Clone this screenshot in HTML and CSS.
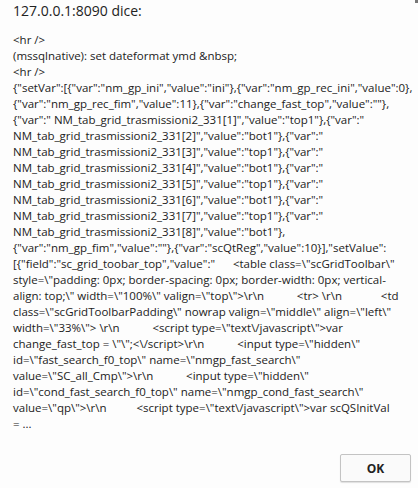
FILE: index.html
```html
<!DOCTYPE html>
<html lang="it">
<head>
    <link rel="stylesheet" href="styles.css">
</head>
<body>
    <div class="dialog">
        <span class="corner"></span>
        <div class="title">127.0.0.1:8090 dice:</div>
        <div class="message">
            <div class="line">&lt;hr /&gt;</div>
            <div class="line">(mssqlnative): set dateformat ymd &amp;nbsp;</div>
            <div class="line">&lt;hr /&gt;</div>
            <div class="line">{"setVar":[{"var":"nm_gp_ini","value":"ini"},{"var":"nm_gp_rec_ini","value":0},</div>
            <div class="line">{"var":"nm_gp_rec_fim","value":11},{"var":"change_fast_top","value":""},</div>
            <div class="line">{"var":" NM_tab_grid_trasmissioni2_331[1]","value":"top1"},{"var":"</div>
            <div class="line">NM_tab_grid_trasmissioni2_331[2]","value":"bot1"},{"var":"</div>
            <div class="line">NM_tab_grid_trasmissioni2_331[3]","value":"top1"},{"var":"</div>
            <div class="line">NM_tab_grid_trasmissioni2_331[4]","value":"bot1"},{"var":"</div>
            <div class="line">NM_tab_grid_trasmissioni2_331[5]","value":"top1"},{"var":"</div>
            <div class="line">NM_tab_grid_trasmissioni2_331[6]","value":"bot1"},{"var":"</div>
            <div class="line">NM_tab_grid_trasmissioni2_331[7]","value":"top1"},{"var":"</div>
            <div class="line">NM_tab_grid_trasmissioni2_331[8]","value":"bot1"},</div>
            <div class="line">{"var":"nm_gp_fim","value":""},{"var":"scQtReg","value":10}],"setValue":</div>
            <div class="line">[{"field":"sc_grid_toobar_top","value":"      &lt;table class=\"scGridToolbar\"</div>
            <div class="line">style=\"padding: 0px; border-spacing: 0px; border-width: 0px; vertical-</div>
            <div class="line">align: top;\" width=\"100%\" valign=\"top\"&gt;\r\n           &lt;tr&gt; \r\n             &lt;td</div>
            <div class="line">class=\"scGridToolbarPadding\" nowrap valign=\"middle\" align=\"left\"</div>
            <div class="line">width=\"33%\"&gt; \r\n           &lt;script type=\"text\/javascript\"&gt;var</div>
            <div class="line">change_fast_top = \"\";&lt;\/script&gt;\r\n           &lt;input type=\"hidden\"</div>
            <div class="line">id=\"fast_search_f0_top\" name=\"nmgp_fast_search\"</div>
            <div class="line">value=\"SC_all_Cmp\"&gt;\r\n           &lt;input type=\"hidden\"</div>
            <div class="line">id=\"cond_fast_search_f0_top\" name=\"nmgp_cond_fast_search\"</div>
            <div class="line">value=\"qp\"&gt;\r\n          &lt;script type=\"text\/javascript\"&gt;var scQSInitVal</div>
            <div class="line">= ...</div>
        </div>
        <div class="footer">
            <button class="ok">OK</button>
        </div>
    </div>
</body>
</html>
```

FILE: styles.css
```css
body {
    margin: 0;
    background-color: #fdfdfd;
    font-family: "Open Sans", "Noto Sans", sans-serif;
    color: #222;
}
.dialog {
    position: relative;
    width: 418px;
    height: 488px;
    box-sizing: border-box;
    padding: 1px 7px 0 13px;
}
.corner {
    position: absolute;
    top: 0;
    right: 0;
    width: 3px;
    height: 3px;
    background-color: #777;
}
.title {
    font-size: 14px;
    line-height: 20px;
    color: #222;
}
.message {
    margin-top: 11px;
    font-size: 11.5px;
    line-height: 16px;
}
.line {
    white-space: pre;
}
.footer {
    display: flex;
    justify-content: flex-end;
    margin-top: 22px;
}
.ok {
    width: 71px;
    height: 28px;
    padding: 0;
    background-color: #fafafa;
    border: 1px solid #c3c3c3;
    border-radius: 2px;
    box-shadow: 0 1px 1px rgba(0, 0, 0, 0.12);
    font-family: "Open Sans", "Noto Sans", sans-serif;
    font-size: 12px;
    font-weight: bold;
    color: #222;
}
```
